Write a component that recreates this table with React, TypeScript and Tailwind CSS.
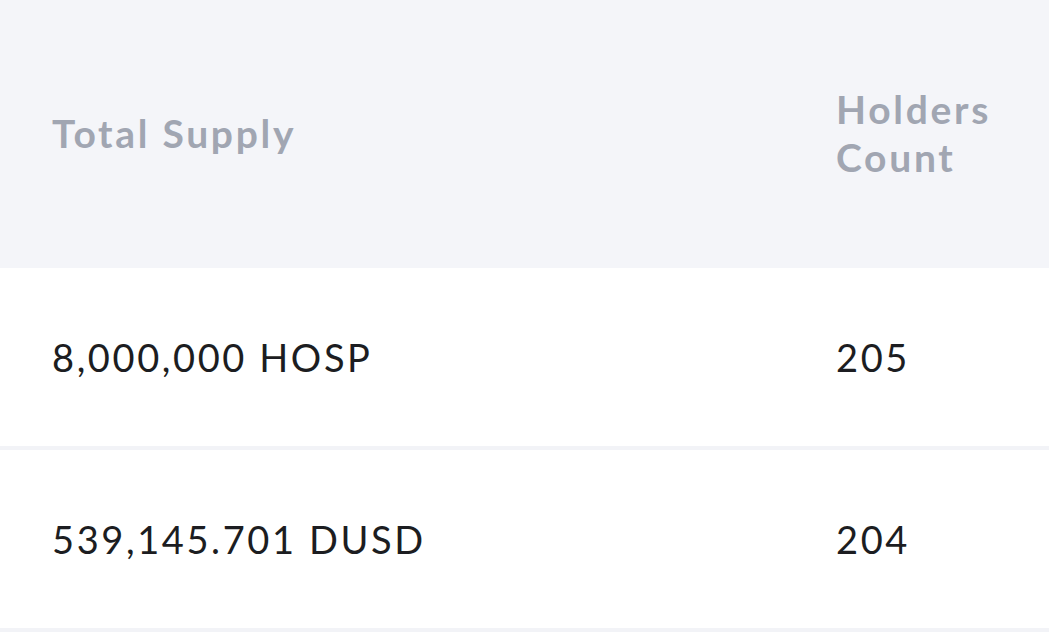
const rows = [
  { supply: "8,000,000 HOSP", holders: "205" },
  { supply: "539,145.701 DUSD", holders: "204" },
];

const App = () => {
  return (
    <div className="w-[1049px] h-[637px] overflow-hidden bg-white font-['Lato','Noto_Sans',sans-serif]">
      <div className="grid grid-cols-[836px_213px] h-[268px] pb-[3px] bg-[#f4f5f9] items-center text-[#a1a6b2] font-bold text-[39px] leading-[48px] tracking-[2.7px]">
        <div className="pl-[52px]">Total Supply</div>
        <div>Holders Count</div>
      </div>
      {rows.map((row) => (
        <div
          key={row.supply}
          className="grid grid-cols-[836px_213px] h-[182px] items-center border-b-4 border-[#f2f3f7] text-[#1c1d21] text-[38px] tracking-[2.6px]"
        >
          <div className="pl-[52px]">{row.supply}</div>
          <div>{row.holders}</div>
        </div>
      ))}
    </div>
  );
};

export default App;
